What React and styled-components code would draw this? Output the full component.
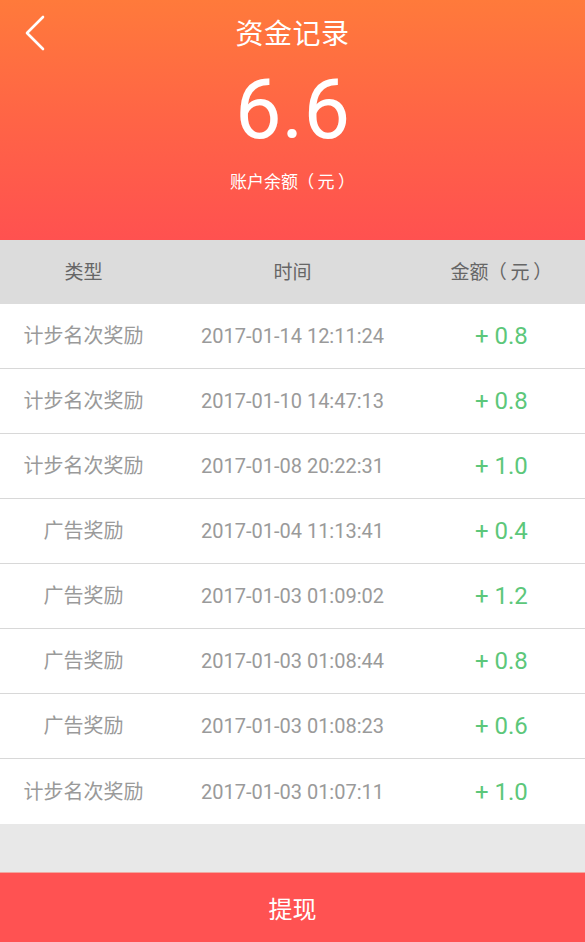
import React from 'react'
import styled, { createGlobalStyle } from 'styled-components'

const GlobalStyle = createGlobalStyle`
  * { box-sizing: border-box; }
  html, body {
    margin: 0;
    padding: 0;
    background: #e8e8e8;
    font-family: Roboto, "Noto Sans CJK SC", sans-serif;
  }
`

const records = [
  { type: '计步名次奖励', time: '2017-01-14 12:11:24', amount: '0.8' },
  { type: '计步名次奖励', time: '2017-01-10 14:47:13', amount: '0.8' },
  { type: '计步名次奖励', time: '2017-01-08 20:22:31', amount: '1.0' },
  { type: '广告奖励', time: '2017-01-04 11:13:41', amount: '0.4' },
  { type: '广告奖励', time: '2017-01-03 01:09:02', amount: '1.2' },
  { type: '广告奖励', time: '2017-01-03 01:08:44', amount: '0.8' },
  { type: '广告奖励', time: '2017-01-03 01:08:23', amount: '0.6' },
  { type: '计步名次奖励', time: '2017-01-03 01:07:11', amount: '1.0' },
]

const Unit = () => (
  <>
    <Paren $open>（</Paren>元<Paren>）</Paren>
  </>
)

const App = () => {
  return (
    <Page>
      <GlobalStyle />
      <Header>
        <NavBar>
          <BackButton aria-label="back">
            <svg width="22" height="36" viewBox="0 0 22 36" fill="none">
              <path d="M19 2 L3 18 L19 34" stroke="#fff" strokeWidth="2.6" strokeLinecap="round" strokeLinejoin="round" />
            </svg>
          </BackButton>
          <Title>资金记录</Title>
        </NavBar>
        <Balance>6.6</Balance>
        <BalanceLabel>账户余额<Unit /></BalanceLabel>
      </Header>

      <TableHead>
        <Cell>类型</Cell>
        <Cell>时间</Cell>
        <Cell>金额<Unit /></Cell>
      </TableHead>

      <List>
        {records.map((r, i) => (
          <Row key={i}>
            <TypeCell>{r.type}</TypeCell>
            <TimeCell>{r.time}</TimeCell>
            <AmountCell>+ {r.amount}</AmountCell>
          </Row>
        ))}
      </List>

      <Spacer />

      <WithdrawButton>提现</WithdrawButton>
    </Page>
  )
}

export default App

const Page = styled.div`
  width: 100%;
  height: 942px;
  display: flex;
  flex-direction: column;
  background: #e8e8e8;
`

const Header = styled.div`
  height: 240px;
  flex-shrink: 0;
  background: linear-gradient(180deg, #ff7a3b 0%, #ff6446 50%, #ff5150 100%);
  color: #fff;
  display: flex;
  flex-direction: column;
  align-items: center;
`

const NavBar = styled.div`
  position: relative;
  width: 100%;
  height: 68px;
  display: flex;
  align-items: center;
  justify-content: center;
`

const BackButton = styled.div`
  position: absolute;
  left: 24px;
  top: 15px;
  display: flex;
`

const Title = styled.div`
  font-size: 28px;
  line-height: 1;
  margin-top: 2px;
  letter-spacing: 0.5px;
`

const Balance = styled.div`
  font-family: Roboto, sans-serif;
  font-size: 83px;
  line-height: 1;
`

const BalanceLabel = styled.div`
  font-size: 17px;
  margin-top: 17px;
`

// the brackets sit a little looser round the unit in the reference
const Paren = styled.span`
  margin: ${p => (p.$open ? '0 0.2em 0 -0.05em' : '0 0 0 0.2em')};
`

const columns = `
  display: grid;
  grid-template-columns: 1fr 1.5fr 1fr;
  align-items: center;
  text-align: center;
`

const TableHead = styled.div`
  ${columns}
  height: 64px;
  flex-shrink: 0;
  background: #dcdcdc;
  color: #666;
  font-size: 19px;
`

const Cell = styled.div`
  white-space: nowrap;
  margin-top: -3px;
`

const List = styled.div`
  background: #fff;
  flex-shrink: 0;
`

const Row = styled.div`
  ${columns}
  height: 65px;
  border-bottom: 1px solid #d8d8d8;

  &:last-child {
    border-bottom: none;
  }
`

const TypeCell = styled.div`
  color: #9a9a9a;
  font-size: 20px;
  white-space: nowrap;
  margin-top: -3px;
`

const TimeCell = styled.div`
  color: #9a9a9a;
  font-size: 20px;
  white-space: nowrap;
`

const AmountCell = styled.div`
  color: #5cc77a;
  font-size: 24px;
  white-space: nowrap;
`

const Spacer = styled.div`
  flex: 1;
  background: #e8e8e8;
`

const WithdrawButton = styled.div`
  height: 70px;
  flex-shrink: 0;
  background: #ff5252;
  border-top: 1px solid #f0a8a0;
  color: #fff;
  font-size: 24px;
  display: flex;
  align-items: center;
  justify-content: center;
`
